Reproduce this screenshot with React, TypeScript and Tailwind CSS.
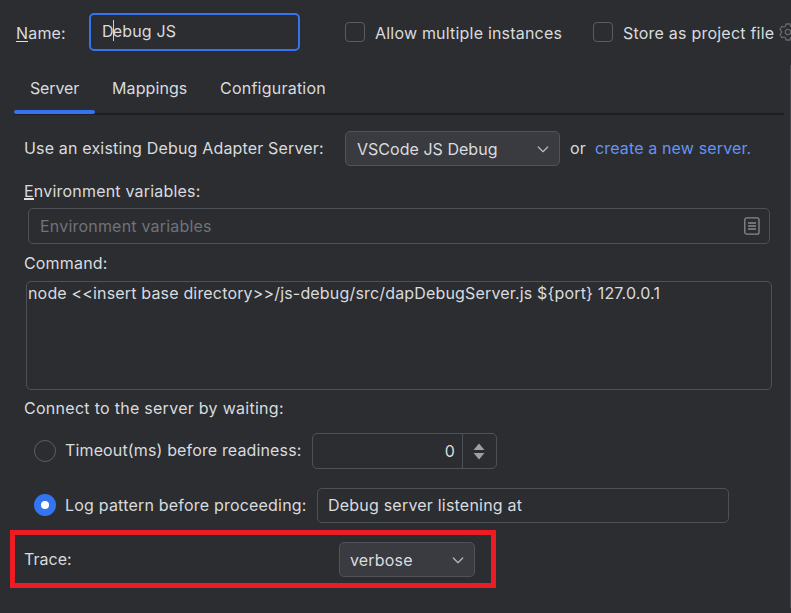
import type { ReactNode } from "react";

function Chevron() {
  return (
    <svg className="mt-[2px] h-[7px] w-[12px] shrink-0" viewBox="0 0 12 7" fill="none" stroke="#b4b8bf" strokeWidth="1.25" strokeLinecap="round" strokeLinejoin="round">
      <path d="M1.3 1 6 5.7 10.7 1" />
    </svg>
  );
}

function Select({ label, className }: { label: string; className: string }) {
  return (
    <div className={`flex h-[35px] shrink-0 items-center justify-between rounded-[5px] border border-[#515359] bg-[#393b40] pr-[10px] ${className}`}>
      <span>{label}</span>
      <Chevron />
    </div>
  );
}

function Checkbox({ children }: { children: ReactNode }) {
  return (
    <label className="flex shrink-0 items-center">
      <span className="-mt-0.5 mr-[10px] size-5 shrink-0 rounded-[4px] border border-[#5a5d63]" />
      {children}
    </label>
  );
}

export default function App() {
  return (
    <div className="relative h-[613px] w-[791px] overflow-hidden bg-[#2b2d30] font-['Inter','Liberation_Sans',sans-serif] text-[16px] leading-[20px] tracking-[0.17px] whitespace-nowrap text-[#d9dbdf]">
      <div className="flex h-16 items-center">
        <label className="ml-[16px] w-[73px] shrink-0 pt-[2px]">
          <span className="inline-block h-[19px] border-b border-[#dfe1e5]">N</span>ame:
        </label>
        <div className="flex h-[38px] w-[211px] shrink-0 items-center rounded-[5px] border-[2.5px] border-[#3574f0] pb-[3px] pl-[11px]">
          <span>D</span>
          <span className="-mx-px h-[21px] w-px bg-[#ced0d6]" />
          <span>ebug JS</span>
        </div>
        <div className="ml-[45px] w-[248px] shrink-0 pt-0.5 tracking-[0.2px]">
          <Checkbox>Allow multiple instances</Checkbox>
        </div>
        <div className="flex shrink-0 items-center pt-0.5 tracking-[0.22px]">
          <Checkbox>Store as project file</Checkbox>
          <svg className="-mt-0.5 ml-[5px] size-[18px] shrink-0" viewBox="0 0 18 18" fill="none" stroke="#64676d" strokeWidth="1.3" strokeLinejoin="round">
            <path d="M7 1h4l.6 2.3 1.2.7 2.3-.7 2 3.5L15.400 8.400v1.200l1.700 1.600-2 3.500-2.300-.7-1.200.7L11 17H7l-.6-2.300-1.200-.7-2.300.7-2-3.500L2.600 9.600V8.400L.9 6.800l2-3.500 2.300.7 1.200-.7Z" />
            <circle cx="9" cy="9" r="2.7" />
          </svg>
        </div>
      </div>

      <div className="mr-[7px] ml-[14px] flex h-[51px] border-b-2 border-[#1e1f22]">
        <div className="-mb-0.5 flex w-[81px] flex-col">
          <span className="mt-[14px] pl-[16px] tracking-[-0.15px]">Server</span>
          <span className="mt-auto mb-px h-1 rounded-full bg-[#3574f0]" />
        </div>
        <span className="mt-[14px] ml-[17px] w-[108px] tracking-[0.1px]">Mappings</span>
        <span className="mt-[14px] tracking-[0.23px]">Configuration</span>
      </div>

      <div className="flex h-[67px] items-center pl-[24px]">
        <span className="w-[321px] pb-[2px]">Use an existing Debug Adapter Server:</span>
        <Select label="VSCode JS Debug" className="w-[215px] pl-[11px] tracking-[0.03px]" />
        <span className="ml-[10px] w-[25px] pb-[2px]">or</span>
        <span className="pb-[2px] tracking-[0.14px] text-[#6494f5]">create a new server.</span>
      </div>

      <div className="-mt-px h-[27px] pl-[24px] tracking-[0.2px]">
        <span className="inline-block h-[19px] border-b-2 border-[#dfe1e5]">E</span>nvironment variables:
      </div>
      <div className="ml-[28px] flex h-[36px] w-[742px] items-center justify-between rounded-[5px] border border-[#4e5157] pr-[8px] pl-[11px] tracking-[0.2px] text-[#6f737a]">
        <span>Environment variables</span>
        <svg className="size-[18px]" viewBox="0 0 18 18" fill="none" stroke="#868a91" strokeWidth="1.3">
          <rect x="1.8" y="0.8" width="14.200" height="16.400" rx="2" />
          <path d="M5 6h8M5 9h8M5 12h8" />
        </svg>
      </div>

      <div className="flex h-[37px] items-center pl-[24px]">Command:</div>
      <div className="ml-[26px] h-[109px] w-[746px] rounded-[5px] border border-[#4e5157] pt-px pl-px">
        {"node <<insert base directory>>/js-debug/src/dapDebugServer.js ${port} 127.0.0.1"}
      </div>

      <div className="flex h-[36px] items-center pl-[24px] tracking-[0.28px]">Connect to the server by waiting:</div>

      <div className="flex h-[50px] items-center pl-[34px]">
        <span className="mr-[9px] size-[22px] shrink-0 rounded-full border border-[#5a5d63]" />
        <span className="w-[247px] shrink-0 pb-[2px] tracking-[0.14px]">Timeout(ms) before readiness:</span>
        <div className="flex h-[36px] w-[185px] rounded-[5px] border border-[#4e5157]">
          <span className="flex flex-1 items-center justify-end border-r border-[#4e5157] pr-[7px]">0</span>
          <span className="flex w-[33px] items-center justify-center pr-px">
            <svg className="h-[17px] w-[12px]" viewBox="0 0 12 17" fill="#9da0a8">
              <path d="M6 0.500 11.500 7H.5ZM6 16.500 11.500 10H.5Z" />
            </svg>
          </span>
        </div>
      </div>

      <div className="flex h-[54px] items-center pt-1 pl-[34px]">
        <span className="mr-[9px] flex size-[22px] shrink-0 items-center justify-center rounded-full bg-[#3574f0]">
          <span className="size-2 rounded-full bg-white" />
        </span>
        <span className="w-[252px] shrink-0 tracking-[0.2px]">Log pattern before proceeding:</span>
        <div className="flex h-[35px] w-[412px] items-center rounded-[5px] border border-[#4e5157] pl-[10px] tracking-[0.21px]">Debug server listening at</div>
      </div>

      <div className="ml-[10px] flex h-[58px] w-[486px] items-center border-5 border-[#ed1c24] pl-[9px]">
        <span className="w-[315px] tracking-[0.02px]">Trace:</span>
        <Select label="verbose" className="w-[136px] pt-px pl-[10px]" />
      </div>

      <div className="absolute top-[65px] right-0 h-[543px] w-px bg-[#47494e]" />
    </div>
  );
}
